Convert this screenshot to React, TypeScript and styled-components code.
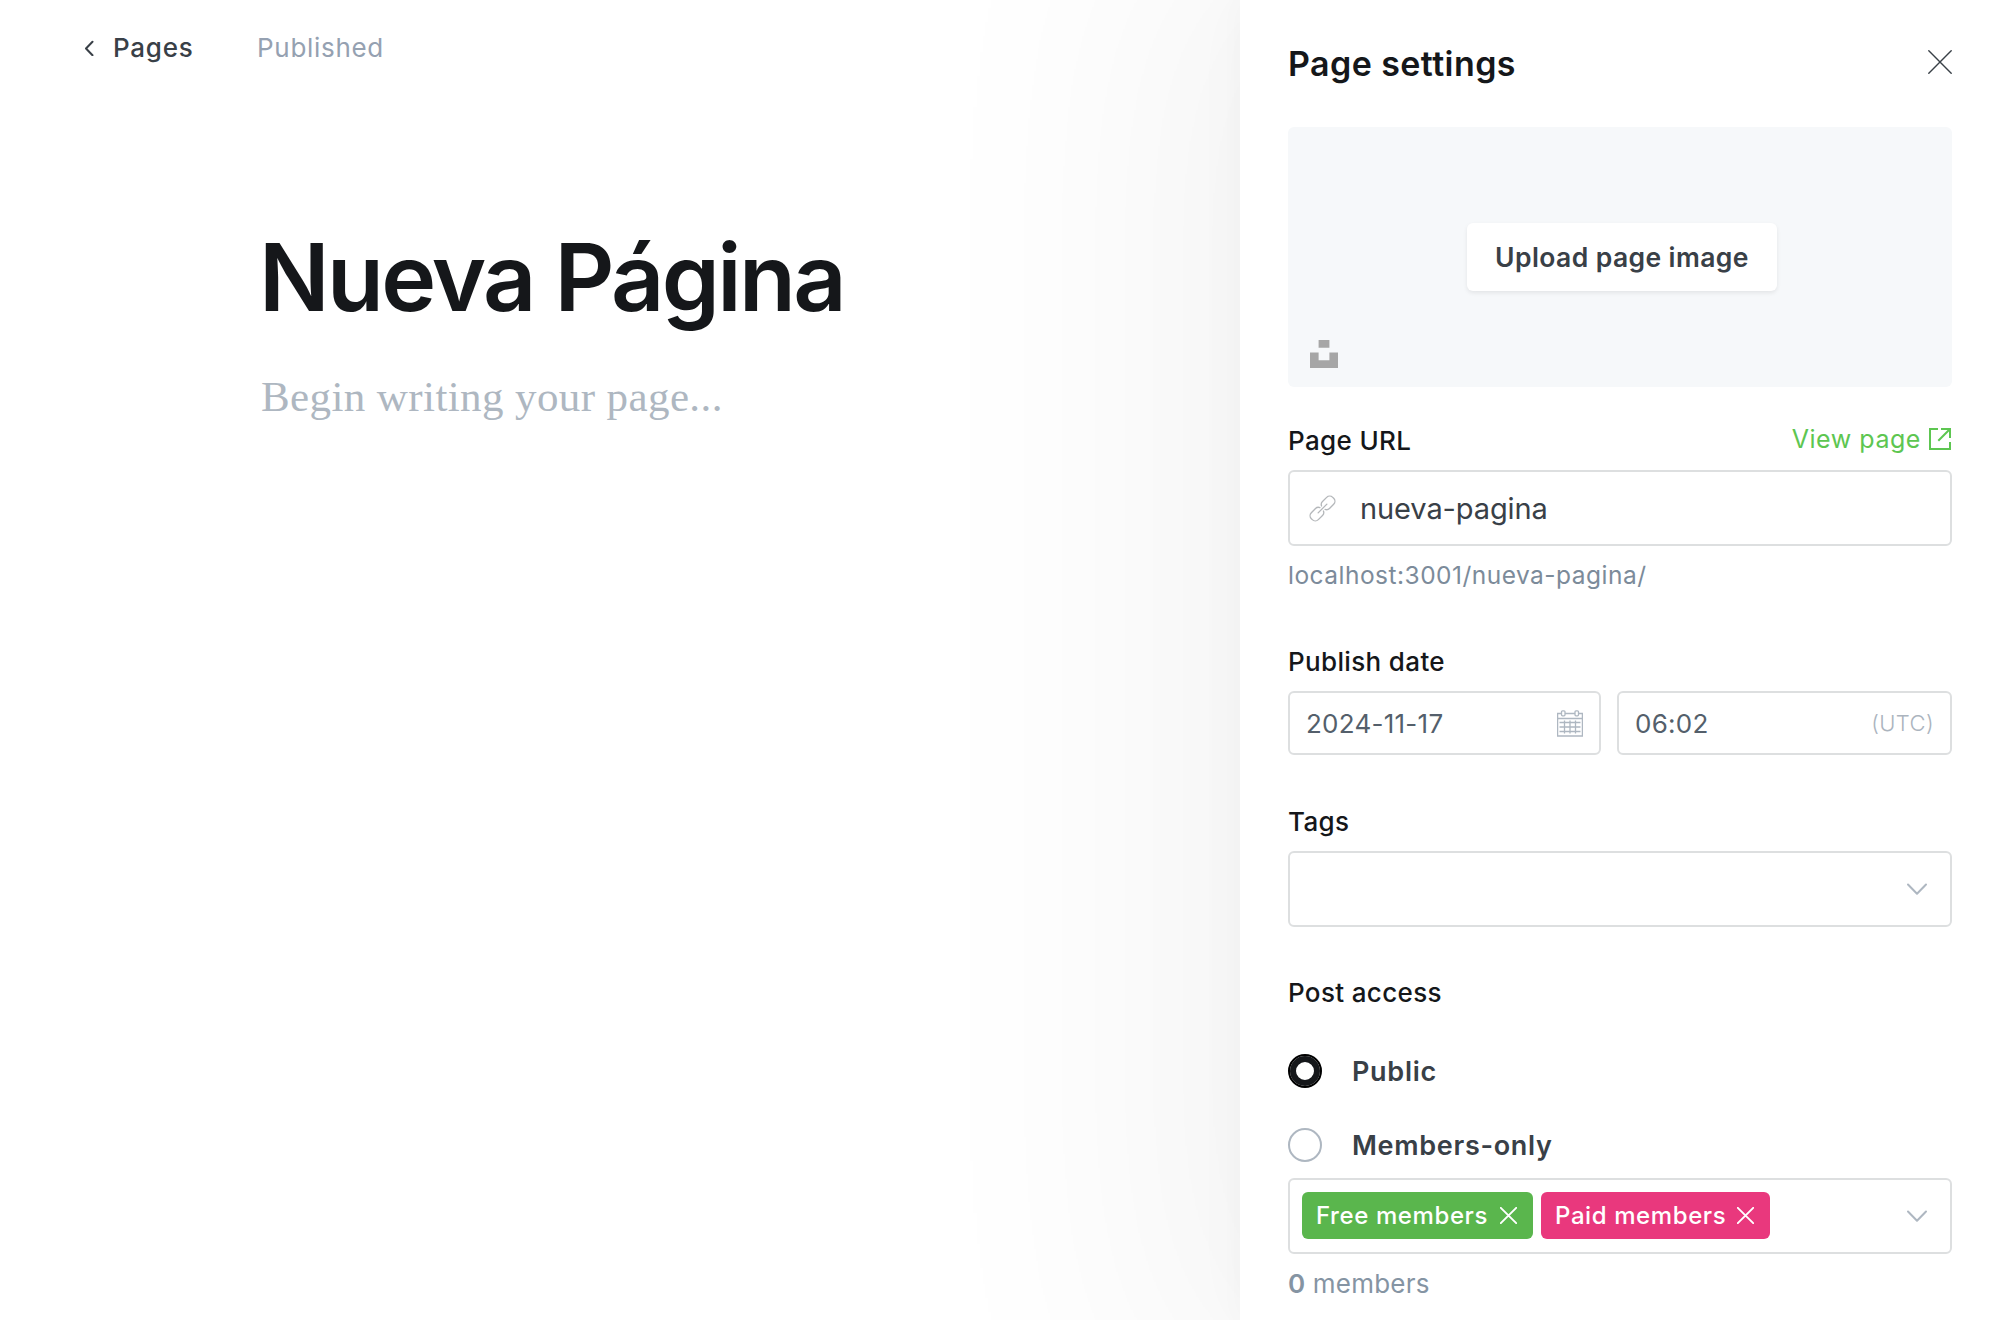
import React from 'react';
import styled, { createGlobalStyle } from 'styled-components';

const Global = createGlobalStyle`
  *, *::before, *::after { box-sizing: border-box; }
  body { margin: 0; background: #fff; font-family: Inter, "Liberation Sans", sans-serif; overflow: hidden; }
  h1, h2, p { margin: 0; font-weight: inherit; }
  button { font: inherit; border: 0; background: none; padding: 0; }
  svg { display: block; flex: none; }
`;

const Screen = styled.div`
  display: grid;
  grid-template-columns: 1240px 760px;
  width: 2000px;
  height: 1320px;
  overflow: hidden;
`;

const Editor = styled.main`
  display: flex;
  flex-direction: column;
`;

const TopBar = styled.header`
  display: flex;
  align-items: center;
  height: 95px;
  padding-left: 84px;
  font-size: 26px;
  line-height: 32px;
`;

const BackLink = styled.a`
  display: flex;
  align-items: center;
  gap: 19px;
  width: 173px;
  color: #394047;
  font-weight: 500;
  letter-spacing: 0.75px;
`;

const Status = styled.span`
  color: #95a1b1;
  letter-spacing: 0.7px;
`;

const Title = styled.h1`
  padding: 124px 0 0 259px;
  font-size: 93px;
  line-height: 116px;
  font-weight: 600;
  letter-spacing: -2.65px;
  color: #15171a;
`;

const Placeholder = styled.p`
  padding: 34px 0 0 261px;
  font-family: "Liberation Serif", serif;
  font-size: 43px;
  line-height: 56px;
  letter-spacing: 0.4px;
  color: #aeb7c1;
`;

const Panel = styled.aside`
  display: flex;
  flex-direction: column;
  height: 1320px;
  padding: 0 48px;
  background: #fff;
  box-shadow: 0 0 330px 85px rgba(0, 0, 0, 0.047), 0 0 70px rgba(0, 0, 0, 0.02), 0 0 26px rgba(0, 0, 0, 0.024);
`;

const PanelHeader = styled.header`
  display: flex;
  align-items: center;
  justify-content: space-between;
  height: 127px;
`;

const PanelTitle = styled.h2`
  font-size: 34px;
  line-height: 44px;
  font-weight: 600;
  letter-spacing: 0.42px;
  color: #15171a;
`;

const CloseButton = styled.button`
  margin-bottom: 3px;
`;

const ImageUploader = styled.div`
  display: grid;
  grid-template-columns: 28px 1fr 24px;
  align-items: center;
  height: 260px;
  padding: 0 22px;
  border-radius: 6px;
  background: #f6f8fa;
`;

const UnsplashButton = styled.button`
  align-self: end;
  margin-bottom: 19px;
`;

const UploadButton = styled.button`
  justify-self: center;
  width: 310px;
  height: 68px;
  border-radius: 6px;
  background: #fff;
  box-shadow: 0 2px 4px rgba(0, 0, 0, 0.08);
  color: #394047;
  font-size: 26.5px;
  font-weight: 600;
  letter-spacing: 0.4px;
  white-space: nowrap;
`;

const Field = styled.section<{ $top: number }>`
  display: flex;
  flex-direction: column;
  margin-top: ${(p) => p.$top}px;
`;

const LabelRow = styled.div`
  display: flex;
  justify-content: space-between;
  height: 32px;
  margin-bottom: 13px;
  font-size: 26px;
  line-height: 32px;
`;

const Label = styled.span`
  font-weight: 500;
  letter-spacing: 0.35px;
  color: #15171a;
`;

const ViewLink = styled.a`
  display: flex;
  align-items: center;
  gap: 8px;
  height: 28px;
  padding-right: 1px;
  color: #5dc651;
  font-size: 25px;
  letter-spacing: 0.55px;
`;

const Box = styled.div<{ $height?: number; $pad?: string }>`
  display: flex;
  align-items: center;
  height: ${(p) => p.$height ?? 76}px;
  padding: ${(p) => p.$pad ?? '0 16px'};
  border: 2px solid #dddfe0;
  border-radius: 6px;
  background: #fff;
`;

const SlugValue = styled.span`
  margin-left: 24px;
  padding-top: 1px;
  font-size: 29px;
  letter-spacing: -0.1px;
  color: #394047;
`;

const Hint = styled.p<{ $top: number; $color: string; $size: number; $spacing: number }>`
  margin-top: ${(p) => p.$top}px;
  font-size: ${(p) => p.$size}px;
  line-height: 32px;
  letter-spacing: ${(p) => p.$spacing}px;
  color: ${(p) => p.$color};

  strong { font-weight: 600; }
`;

const DateRow = styled.div`
  display: grid;
  grid-template-columns: 313px 335px;
  gap: 16px;
`;

const DateValue = styled.span`
  flex: 1;
  font-size: 26px;
  letter-spacing: 0.25px;
  color: #545f6b;
`;

const Zone = styled.span`
  font-size: 22px;
  font-weight: 300;
  letter-spacing: 0.4px;
  color: #abb4be;
`;

const Spacer = styled.span`
  flex: 1;
`;

const RadioList = styled.div`
  display: flex;
  flex-direction: column;
  gap: 40px;
  margin: 32px 0 16px;
`;

const RadioRow = styled.label`
  display: flex;
  align-items: center;
  gap: 30px;
  height: 34px;
  font-size: 27px;
  font-weight: 600;
  letter-spacing: 0.7px;
  color: #394047;
`;

const Radio = styled.span<{ $checked?: boolean }>`
  width: 34px;
  height: 34px;
  border-radius: 50%;
  border: ${(p) => (p.$checked ? '2px solid #000' : '2px solid #aeb7c1')};
  box-shadow: ${(p) => (p.$checked ? 'inset 0 0 0 6px #15171a' : 'none')};
  background: #fff;
`;

const Token = styled.span<{ $color: string; $width: number }>`
  display: flex;
  align-items: center;
  justify-content: space-between;
  width: ${(p) => p.$width}px;
  height: 47px;
  margin: 0 8px 1px 0;
  padding: 0 16px 0 14px;
  border-radius: 6px;
  background: ${(p) => p.$color};
  color: #fff;
  font-size: 24px;
  font-weight: 500;
  letter-spacing: 0.6px;
  white-space: nowrap;
`;

const Cross = ({ size, width, color }: { size: number; width: number; color: string }) => (
  <svg width={size} height={size} viewBox={`0 0 ${size} ${size}`} stroke={color} strokeWidth={width} strokeLinecap="round">
    <path d={`M.8 .8L${size - 0.8} ${size - 0.8}M${size - 0.8} .8L.8 ${size - 0.8}`} />
  </svg>
);

const ChevronDown = () => (
  <svg width="20" height="12" viewBox="0 0 20 12" fill="none" stroke="#aeb7c1" strokeWidth="2" strokeLinecap="round" strokeLinejoin="round">
    <path d="M1 1.500l9 9.2L19 1.500" />
  </svg>
);

const ChevronLeft = () => (
  <svg width="10" height="16" viewBox="0 0 10 16" fill="none" stroke="#394047" strokeWidth="2" strokeLinecap="round" strokeLinejoin="round">
    <path d="M8.500 1.800L2 8.500l6.500 6.700" />
  </svg>
);

const UnsplashIcon = () => (
  <svg width="28" height="28" viewBox="0 0 28 28" fill="#a6a6a6">
    <path d="M8.6 0h10.8v7.8H8.6zM0 12.4h8.6v7.8h10.8v-7.8H28V28H0z" />
  </svg>
);

const ExternalIcon = () => (
  <svg width="22" height="22" viewBox="0 0 22 22" fill="none" stroke="#5dc651" strokeWidth="2">
    <path d="M9 1H1v20h20v-7M12 1h9v9M21 1L9.300 12.700" />
  </svg>
);

const LinkIcon = () => (
  <svg width="27" height="27" viewBox="0 0 27 27" fill="none" stroke="#b4b7ba" strokeWidth="1.4" strokeLinecap="round">
    <g transform="translate(13.500 13.500) rotate(-45) scale(.95)">
      <path d="M-6.500 0h13" />
      <path d="M1.200 -2.600A4.300 4.300 0 0 1 5.200 -5.200H11.400A4.500 4.500 0 0 1 15.900 -.7V.7A4.500 4.500 0 0 1 11.400 5.200H5.200A4.300 4.300 0 0 1 1.200 2.600" />
      <path d="M-1.200 -2.600A4.300 4.300 0 0 0 -5.200 -5.200H-11.400A4.500 4.500 0 0 0 -15.900 -.7V.7A4.500 4.500 0 0 0 -11.400 5.200H-5.200A4.300 4.300 0 0 0 -1.200 2.600" />
    </g>
  </svg>
);

const CalendarIcon = () => (
  <svg width="26" height="27" viewBox="0 0 26 27" fill="none" stroke="#aeb7c1" strokeWidth="1.3">
    <path d="M4.500 3.500H.6v22.500h24.800V3.500h-3.900M8 3.500h10M.6 8.500h24.800" />
    <rect x="4.500" y=".8" width="3.500" height="5" rx="1" />
    <rect x="18" y=".8" width="3.500" height="5" rx="1" />
    <path d="M2.500 12.500h21M2.500 17h21M2.500 21.500h21M7.500 10.500v13M13 10.500v13M18.500 10.500v13" />
  </svg>
);

export default function App() {
  return (
    <>
      <Global />
      <Screen>
        <Editor>
          <TopBar>
            <BackLink>
              <ChevronLeft />
              Pages
            </BackLink>
            <Status>Published</Status>
          </TopBar>
          <Title>Nueva Página</Title>
          <Placeholder>Begin writing your page...</Placeholder>
        </Editor>
        <Panel>
          <PanelHeader>
            <PanelTitle>Page settings</PanelTitle>
            <CloseButton aria-label="Close">
              <Cross size={24} width={1.4} color="#394047" />
            </CloseButton>
          </PanelHeader>
          <ImageUploader>
            <UnsplashButton aria-label="Unsplash">
              <UnsplashIcon />
            </UnsplashButton>
            <UploadButton>Upload page image</UploadButton>
          </ImageUploader>

          <Field $top={38}>
            <LabelRow>
              <Label>Page URL</Label>
              <ViewLink>
                View page
                <ExternalIcon />
              </ViewLink>
            </LabelRow>
            <Box $pad="0 19px">
              <LinkIcon />
              <SlugValue>nueva-pagina</SlugValue>
            </Box>
            <Hint $top={13} $color="#7c8b9a" $size={24.5} $spacing={0.48}>
              localhost:3001/nueva-pagina/
            </Hint>
          </Field>

          <Field $top={55}>
            <LabelRow>
              <Label>Publish date</Label>
            </LabelRow>
            <DateRow>
              <Box $height={64}>
                <DateValue>2024-11-17</DateValue>
                <CalendarIcon />
              </Box>
              <Box $height={64}>
                <DateValue>06:02</DateValue>
                <Zone>(UTC)</Zone>
              </Box>
            </DateRow>
          </Field>

          <Field $top={51}>
            <LabelRow>
              <Label>Tags</Label>
            </LabelRow>
            <Box $pad="0 23px">
              <Spacer />
              <ChevronDown />
            </Box>
          </Field>

          <Field $top={50}>
            <LabelRow>
              <Label>Post access</Label>
            </LabelRow>
            <RadioList>
              <RadioRow>
                <Radio $checked />
                Public
              </RadioRow>
              <RadioRow>
                <Radio />
                Members-only
              </RadioRow>
            </RadioList>
            <Box $pad="0 23px 0 12px">
              <Token $color="#5ab64d" $width={231}>
                Free members
                <Cross size={17} width={1.9} color="#fff" />
              </Token>
              <Token $color="#e9387d" $width={229}>
                Paid members
                <Cross size={17} width={1.9} color="#fff" />
              </Token>
              <Spacer />
              <ChevronDown />
            </Box>
            <Hint $top={14} $color="#8594a3" $size={26} $spacing={0.2}>
              <strong>0</strong> members
            </Hint>
          </Field>
        </Panel>
      </Screen>
    </>
  );
}
